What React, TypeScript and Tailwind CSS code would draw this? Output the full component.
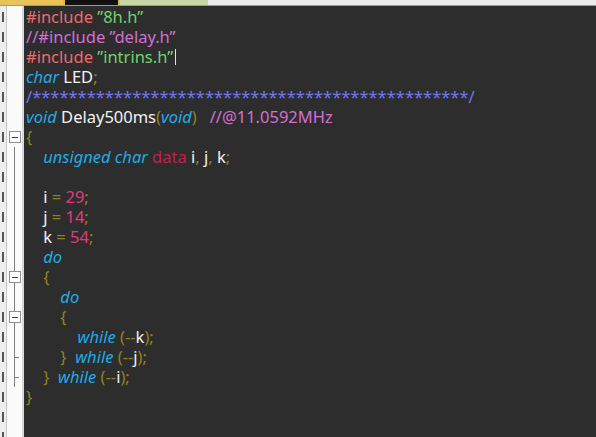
type Seg = [string, string]

const P = "text-[#ee6b6b]"
const G = "text-[#6fd36f]"
const C = "text-[#d36fd3]"
const K = "text-[#22aae6] italic"
const W = "text-[#f2f2f2]"
const O = "text-[#8c8420]"
const N = "text-[#e23a7c]"
const D = "text-[#c3204c]"
const S = "text-[#7474f2]"

const lines: Seg[][] = [
  [[P, "#include "], [G, "\u201d8h.h\u201d"]],
  [[C, "//#include \u201ddelay.h\u201d"]],
  [[P, "#include "], [G, "\u201dintrins.h\u201d"]],
  [[K, "char"], [W, " LED"], [O, ";"]],
  [[S, "/" + "*".repeat(48) + "/"]],
  [[K, "void"], [W, " Delay500ms"], [O, "("], [K, "void"], [O, ")"], [W, "   "], [C, "//@11.0592MHz"]],
  [[O, "{"]],
  [[W, "    "], [K, "unsigned char "], [D, "data "], [W, "i"], [O, ", "], [W, "j"], [O, ", "], [W, "k"], [O, ";"]],
  [],
  [[W, "    i "], [O, "= "], [N, "29"], [O, ";"]],
  [[W, "    j "], [O, "= "], [N, "14"], [O, ";"]],
  [[W, "    k "], [O, "= "], [N, "54"], [O, ";"]],
  [[W, "    "], [K, "do"]],
  [[O, "    {"]],
  [[W, "        "], [K, "do"]],
  [[O, "        {"]],
  [[W, "            "], [K, "while "], [O, "(--"], [W, "k"], [O, ");"]],
  [[O, "        }  "], [K, "while "], [O, "(--"], [W, "j"], [O, ");"]],
  [[O, "    }  "], [K, "while "], [O, "(--"], [W, "i"], [O, ");"]],
  [[O, "}"]],
  [],
  [],
]

const foldRows: Record<number, string> = { 6: "box", 13: "box", 15: "box", 17: "tick", 18: "tick" }

export default function App() {
  return (
    <div className="w-[596px] h-[437px] overflow-hidden bg-[#2d2d2d] flex flex-col">
      <div className="h-[6px] flex shrink-0 border-b border-[#9a9a9a]">
        <div className="w-[63px] bg-[#e9c35a]" />
        <div className="w-[57px] bg-[#111] border-x-2 border-[#e0b94c]" />
        <div className="w-[88px] bg-[#c9d6a8]" />
        <div className="flex-1 bg-[#ececec]" />
      </div>
      <div className="flex flex-1">
        <div className="w-[7px] bg-[#eeeeee] border-r border-[#c8c8c8] flex flex-col pt-[1px]">
          {lines.map((_, i) => (
            <div key={i} className="h-[20px] flex items-center">
              <div className="w-[4px] h-[10px] border-r-2 border-[#555]" />
            </div>
          ))}
        </div>
        <div className="w-[17px] bg-[#fafafa] border-r-2 border-[#d8d8d8] flex flex-col pt-[1px]">
          {lines.map((_, i) => {
            const f = foldRows[i]
            const line = i > 6 && i < 19
            return (
              <div key={i} className="h-[20px] relative flex items-center justify-center">
                {line && <div className="absolute left-[7px] top-0 bottom-0 w-px bg-[#808080]" />}
                {f === "box" && (
                  <div className="relative w-[12px] h-[12px] border border-[#909090] bg-white flex items-center justify-center">
                    <div className="w-[6px] h-px bg-[#404040]" />
                  </div>
                )}
                {f === "tick" && <div className="absolute left-[7px] top-[10px] w-[5px] h-px bg-[#808080]" />}
              </div>
            )
          })}
        </div>
        <div className="flex-1 pl-[2px] pt-[1px] font-['Liberation_Mono'] text-[16.5px] leading-[20px] whitespace-pre">
          {lines.map((l, i) => (
            <div key={i} className="h-[20px] flex items-center">
              {l.map(([c, t], j) => (
                <span key={j} className={c}>{t}</span>
              ))}
              {i === 2 && <span className="ml-[2px] w-px h-[16px] bg-[#e0e0e0]" />}
            </div>
          ))}
        </div>
      </div>
    </div>
  )
}
